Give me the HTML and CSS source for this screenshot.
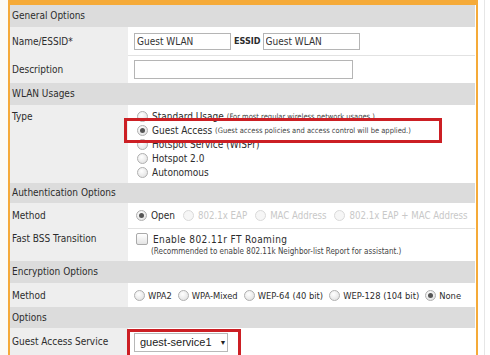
FILE: index.html
```html
<!DOCTYPE html>
<html lang="en">
<head>
<meta charset="UTF-8" />
<title>WLAN settings</title>
<link rel="stylesheet" href="styles.css">
</head>
<body>
<div class="page">
  <div class="gutter"></div>
  <div class="panel">
    <div class="section">General Options</div>
    <div class="row r-name">
      <div class="label">Name/ESSID*</div>
      <div class="value">
        <input class="field f-name" type="text" value="Guest WLAN">
        <b class="essid">ESSID</b>
        <input class="field f-name" type="text" value="Guest WLAN">
      </div>
    </div>
    <div class="row r-desc sep">
      <div class="label">Description</div>
      <div class="value"><input class="field f-desc" type="text" value=""></div>
    </div>

    <div class="section">WLAN Usages</div>
    <div class="row r-type">
      <div class="label">Type</div>
      <div class="value list">
        <label class="opt"><span class="radio"></span>Standard Usage <small>(For most regular wireless network usages.)</small></label>
        <label class="opt"><span class="radio on"></span>Guest Access <small>(Guest access policies and access control will be applied.)</small></label>
        <label class="opt"><span class="radio"></span>Hotspot Service (WISPr)</label>
        <label class="opt"><span class="radio"></span>Hotspot 2.0</label>
        <label class="opt"><span class="radio"></span>Autonomous</label>
        <div class="mark mark-type"></div>
      </div>
    </div>

    <div class="section h-auth">Authentication Options</div>
    <div class="row r-method">
      <div class="label">Method</div>
      <div class="value inline auth">
        <label class="opt"><span class="radio on"></span>Open</label>
        <label class="opt off"><span class="radio"></span>802.1x EAP</label>
        <label class="opt off"><span class="radio"></span>MAC Address</label>
        <label class="opt off"><span class="radio"></span>802.1x EAP + MAC Address</label>
      </div>
    </div>
    <div class="row r-fbt sep">
      <div class="label">Fast BSS Transition</div>
      <div class="value">
        <label class="opt spaced"><span class="check"></span>Enable 802.11r FT Roaming</label>
        <div class="note">(Recommended to enable 802.11k Neighbor-list Report for assistant.)</div>
      </div>
    </div>

    <div class="section">Encryption Options</div>
    <div class="row r-enc">
      <div class="label">Method</div>
      <div class="value inline enc">
        <label class="opt"><span class="radio"></span>WPA2</label>
        <label class="opt"><span class="radio"></span>WPA-Mixed</label>
        <label class="opt"><span class="radio"></span>WEP-64 (40 bit)</label>
        <label class="opt"><span class="radio"></span>WEP-128 (104 bit)</label>
        <label class="opt"><span class="radio on"></span>None</label>
      </div>
    </div>

    <div class="section h-options">Options</div>
    <div class="row r-service">
      <div class="label">Guest Access Service</div>
      <div class="value">
        <div class="select">guest-service1<span class="caret">&#9660;</span></div>
        <div class="mark mark-service"></div>
      </div>
    </div>
  </div>
  <div class="edge"></div>
</div>
</body>
</html>
```

FILE: styles.css
```css
body {
  margin: 0;
  background: #fff;
  font-family: "DejaVu Sans", sans-serif;
  font-stretch: condensed;
  font-size: 10px;
  color: #2c2c2c;
  overflow: hidden;
}
.page {
  display: flex;
  height: 355px;
  overflow: hidden;
}
.gutter {
  width: 8px;
  background: #fbfaf5;
}
.panel {
  width: 465px;
  padding-right: 1px;
  border: solid #f5aa38;
  border-width: 5px 2px 0 2px;
  background: #fff;
}
.edge {
  width: 1px;
  margin-left: 6px;
  background: #e6e6e6;
}
.section {
  height: 22px;
  line-height: 22px;
  padding-left: 2px;
  background: #dcdcdc;
}
.h-auth {
  height: 20px;
  line-height: 20px;
}
.h-options {
  height: 21px;
  line-height: 21px;
}
.row {
  display: grid;
  grid-template-columns: 118px 1fr;
}
.label {
  background: #eeeeee;
  padding-left: 2px;
  display: flex;
  align-items: center;
}
.value {
  position: relative;
  background: #fff;
  padding-left: 6px;
  display: flex;
  align-items: center;
}
.sep .value {
  border-top: 1px solid #e2e2e2;
}
.r-name, .r-desc { height: 28px; }
.r-method { height: 25px; }
.r-enc { height: 24px; }
.r-service { height: 27px; }

.field {
  height: 17px;
  box-sizing: border-box;
  border: 1px solid #b5b5b5;
  padding: 0 2px;
  font: inherit;
  color: #333;
  background: #fff;
  margin: 0;
}
.f-name { width: 97px; }
.f-desc { width: 219px; height: 19px; }
.essid {
  font-size: 9px;
  margin: 0 2px 0 3px;
}

.r-type { height: 78px; }
.r-type .label, .r-fbt .label {
  align-items: flex-start;
}
.r-type .label { padding-top: 6px; }
.r-fbt { height: 33px; }
.r-fbt .label { padding-top: 5px; }
.list {
  flex-direction: column;
  align-items: flex-start;
  justify-content: flex-start;
  padding-top: 4px;
  padding-left: 9px;
}
.list .opt {
  height: 14px;
}
.opt {
  display: flex;
  align-items: center;
  white-space: nowrap;
}
.opt small {
  font-size: 7.5px;
  color: #444;
  margin-left: 3px;
}
.radio {
  width: 9px;
  height: 9px;
  border-radius: 50%;
  border: 1px solid #b0b0b0;
  background: radial-gradient(circle at 40% 35%, #fff, #dcdcdc);
  margin-right: 4px;
  position: relative;
  flex: none;
}
.radio.on::after {
  content: "";
  position: absolute;
  left: 2px;
  top: 2px;
  width: 5px;
  height: 5px;
  border-radius: 50%;
  background: #555;
}
.inline {
  padding-left: 8px;
  gap: 9px;
}
.auth {
  gap: 8px;
}
.off {
  color: #c8c8c8;
  font-size: 9.6px;
}
.off .radio {
  border-color: #dadada;
  background: #f6f6f6;
}
.enc {
  gap: 6px;
  padding-left: 6px;
}
.enc .opt {
  font-size: 9.3px;
}
.enc .radio {
  margin-right: 3px;
}

.r-fbt .value {
  flex-direction: column;
  align-items: flex-start;
  justify-content: flex-start;
  padding-top: 3px;
  padding-left: 8px;
}
.check {
  width: 10px;
  height: 10px;
  border: 1px solid #aaa;
  border-radius: 2px;
  background: linear-gradient(#fff, #e4e4e4);
  margin-right: 5px;
  flex: none;
}
.spaced {
  letter-spacing: 0.4px;
  height: 14px;
}
.note {
  font-size: 8px;
  margin-left: 15px;
  margin-top: 1px;
  color: #444;
  white-space: nowrap;
}

.r-service .value {
  align-items: flex-start;
  padding-top: 5px;
}
.select {
  font-family: "Liberation Sans", Arial, sans-serif;
  font-stretch: normal;
  font-size: 11px;
  color: #222;
  height: 19px;
  line-height: 17px;
  box-sizing: border-box;
  width: 94px;
  border: 1px solid #b8b8b8;
  padding-left: 5px;
  white-space: nowrap;
}
.caret {
  font-size: 7px;
  margin-left: 8px;
  vertical-align: 1px;
}
.mark {
  position: absolute;
  border: 3px solid #cc1f24;
  box-sizing: border-box;
}
.mark-type {
  left: -4px;
  top: 13px;
  width: 318px;
  height: 25px;
}
.mark-service {
  left: -1px;
  top: 1px;
  width: 114px;
  height: 32px;
}
```
